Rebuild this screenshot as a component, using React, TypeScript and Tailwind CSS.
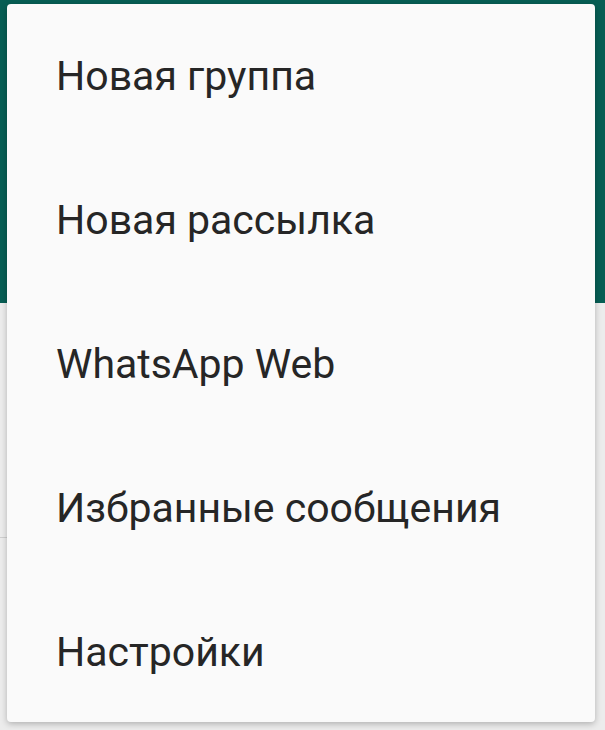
import React from 'react'

const items = ['Новая группа', 'Новая рассылка', 'WhatsApp Web', 'Избранные сообщения', 'Настройки']

const App = () => {
  return (
    <div className="relative h-[730px] w-[605px] overflow-hidden bg-[#ececec] font-['Roboto',sans-serif]">
      {/* app behind the menu */}
      <div className="h-[303px] bg-[#075e54]" />
      <div className="pt-[138px]">
        <div className="-ml-[70px] text-[28px] leading-[32px] text-[#777]">Чаты и</div>
        <div className="mt-[64px] h-px w-[40px] bg-[#cfcfcf]" />
      </div>

      {/* overflow menu */}
      <div className="absolute left-[7px] top-[4px] h-[718px] w-[588px] overflow-hidden rounded-[4px] bg-[#fafafa] pt-[1px] shadow-[0_2px_6px_rgba(0,0,0,0.25)]">
        {items.map((label) => (
          <div key={label} className="flex h-[144px] items-center pl-[49px] text-[41px] text-[#262626]">
            {label}
          </div>
        ))}
      </div>
    </div>
  )
}

export default App
